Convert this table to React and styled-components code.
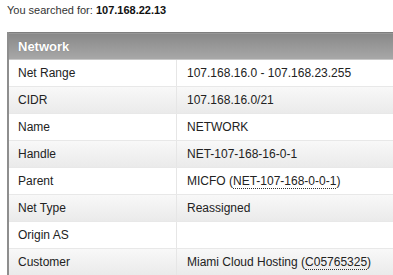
import React from "react";
import styled, { createGlobalStyle } from "styled-components";

const Global = createGlobalStyle`
  html, body { margin: 0; padding: 0; background: #fff; }
  body { font-family: "Liberation Sans", Arial, sans-serif; color: #222; overflow: hidden; }
`;

const Page = styled.div`
  padding: 4px 0 0 7px;
  width: 400px;
`;

const Searched = styled.div`
  font-size: 11px;
  line-height: 13px;
  color: #333;
  height: 28px;
  b { color: #111; }
`;

const Table = styled.table`
  border-collapse: collapse;
  width: 392px;
  border-left: 2px solid #8e8e8e;
  font-size: 12px;
`;

const HeadCell = styled.th`
  height: 26px;
  padding: 0 0 0 9px;
  text-align: left;
  color: #fff;
  font-size: 13px;
  font-weight: bold;
  text-shadow: 0 0 1px rgba(0, 0, 0, 0.25);
  background: linear-gradient(#888888, #a8a8a8);
  border-top: 1px solid #7e7e7e;
  border-bottom: 1px solid #c8c8c8;
`;

const Row = styled.tr`
  background: ${(p) => (p.$alt ? "linear-gradient(#f8f8f8, #eaeaea)" : "#fff")};
`;

const Label = styled.td`
  height: 26px;
  width: 158px;
  padding: 0 0 0 9px;
  border-bottom: 1px solid #e8e8e8;
  border-right: 1px solid #e6e6e6;
  color: #222;
`;

const Value = styled.td`
  height: 26px;
  padding: 0 0 0 10px;
  border-bottom: 1px solid #e8e8e8;
  color: #222;
`;

const Abbr = styled.span`
  border-bottom: 1px dotted #333;
`;

const rows = [
  ["Net Range", "107.168.16.0 - 107.168.23.255"],
  ["CIDR", "107.168.16.0/21"],
  ["Name", "NETWORK"],
  ["Handle", "NET-107-168-16-0-1"],
  ["Parent", <>MICFO (<Abbr>NET-107-168-0-0-1</Abbr>)</>],
  ["Net Type", "Reassigned"],
  ["Origin AS", ""],
  ["Customer", <>Miami Cloud Hosting (<Abbr>C05765325</Abbr>)</>],
];

export default function App() {
  return (
    <Page>
      <Global />
      <Searched>
        You searched for: <b>107.168.22.13</b>
      </Searched>
      <Table>
        <thead>
          <tr>
            <HeadCell colSpan={2}>Network</HeadCell>
          </tr>
        </thead>
        <tbody>
          {rows.map(([k, v], i) => (
            <Row key={k} $alt={i % 2 === 1}>
              <Label>{k}</Label>
              <Value>{v}</Value>
            </Row>
          ))}
        </tbody>
      </Table>
    </Page>
  );
}
